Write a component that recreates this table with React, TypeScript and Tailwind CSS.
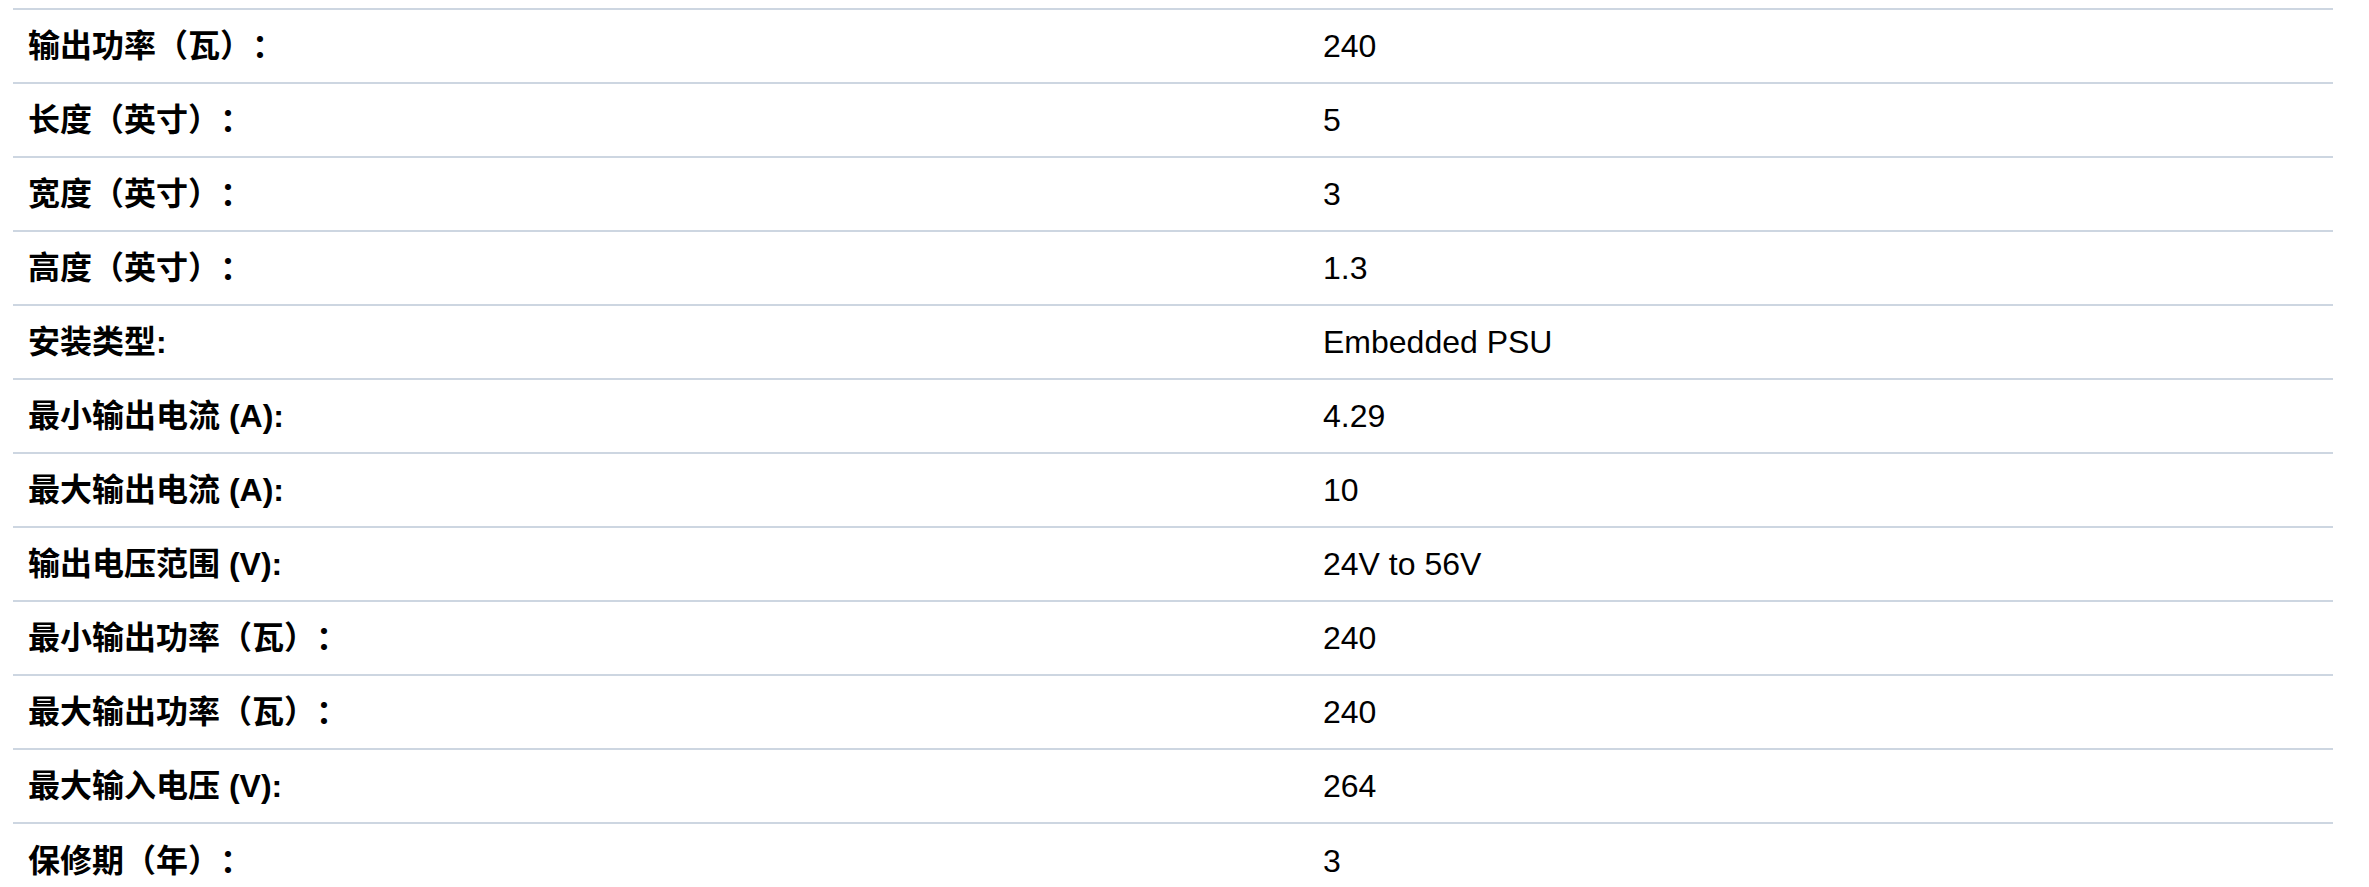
import React from 'react';

const specs = [
  { label: '输出功率（瓦）：', value: '240' },
  { label: '长度（英寸）：', value: '5' },
  { label: '宽度（英寸）：', value: '3' },
  { label: '高度（英寸）：', value: '1.3' },
  { label: '安装类型:', value: 'Embedded PSU' },
  { label: '最小输出电流 (A):', value: '4.29' },
  { label: '最大输出电流 (A):', value: '10' },
  { label: '输出电压范围 (V):', value: '24V to 56V' },
  { label: '最小输出功率（瓦）：', value: '240' },
  { label: '最大输出功率（瓦）：', value: '240' },
  { label: '最大输入电压 (V):', value: '264' },
  { label: '保修期（年）：', value: '3' },
];

const App = () => {
  return (
    <div className="min-h-screen bg-white pt-[8px] pl-[13px] font-['Liberation_Sans','Noto_Sans_CJK_SC',sans-serif] text-black [text-spacing-trim:space-all]">
      <table className="w-[2320px] border-collapse table-fixed">
        <tbody>
          {specs.map((row, i) => (
            <tr key={i} className="border-t-2 border-[#cdd6e1] h-[74px]">
              <td className="w-[1295px] pl-[15px] align-middle text-[32px] font-bold leading-none whitespace-nowrap">
                {row.label}
              </td>
              <td className="pl-[15px] align-middle text-[32px] leading-none whitespace-nowrap">
                {row.value}
              </td>
            </tr>
          ))}
        </tbody>
      </table>
    </div>
  );
};

export default App;
